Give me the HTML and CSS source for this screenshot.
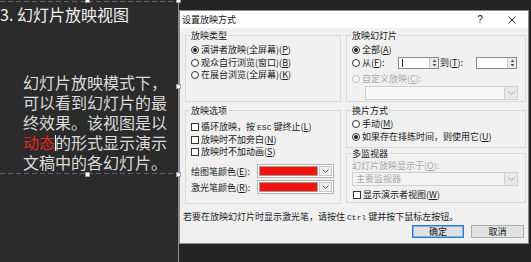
FILE: index.html
```html
<!DOCTYPE html>
<html lang="zh-CN">
<head>
<meta charset="utf-8">
<title>设置放映方式</title>
<link rel="stylesheet" href="styles.css">
</head>
<body>
<div class="stage">
  <section class="slide">
    <div class="textbox">
      <h1 class="slide-title">3. 幻灯片放映视图</h1>
      <p class="slide-body">幻灯片放映模式下，<br>可以看到幻灯片的最<br>终效果。该视图是以<br><span class="hot">动态</span><span class="caret"></span>的形式显示演示<br>文稿中的各幻灯片。</p>
      <span class="handle h-top-mid"></span>
      <span class="handle h-top-right"></span>
      <span class="handle h-mid-right"></span>
      <span class="handle h-bot-right"></span>
      <span class="handle h-bot-mid"></span>
    </div>
  </section>
  <section class="desk">
    <div class="dialog">
      <div class="titlebar">
        <span class="dlg-title">设置放映方式</span>
        <span class="tb-btn tb-help">?</span>
        <span class="tb-btn tb-close"><svg width="8" height="8" viewBox="0 0 8 8"><path d="M0.5 0.5 L7.5 7.5 M7.5 0.5 L0.5 7.5" stroke="#222" stroke-width="1" fill="none"/></svg></span>
      </div>
      <div class="dlg-body">
        <div class="columns">
          <div class="col col-left">
            <div class="group g-type">
              <div class="legend">放映类型</div>
              <div class="rows first">
                <div class="row"><span class="radio on"></span><span>演讲者放映(全屏幕)(<u>P</u>)</span></div>
                <div class="row"><span class="radio"></span><span>观众自行浏览(窗口)(<u>B</u>)</span></div>
                <div class="row"><span class="radio"></span><span>在展台浏览(全屏幕)(<u>K</u>)</span></div>
              </div>
            </div>
            <div class="group g-opts">
              <div class="legend">放映选项</div>
              <div class="rows opts">
                <div class="row"><span class="check"></span><span>循环放映，按 <span class="mono">ESC</span> 键终止(<u>L</u>)</span></div>
                <div class="row"><span class="check"></span><span>放映时不加旁白(<u>N</u>)</span></div>
                <div class="row"><span class="check"></span><span>放映时不加动画(<u>S</u>)</span></div>
              </div>
              <div class="color-row first-color">
                <span class="color-label">绘图笔颜色(<u>E</u>):</span>
                <span class="colorpick"><span class="swatch"></span><span class="arrowbox"><svg width="7" height="4" viewBox="0 0 7 4"><path d="M0.5 0.5 L3.5 3.5 L6.5 0.5" stroke="#555" fill="none"/></svg></span></span>
              </div>
              <div class="color-row">
                <span class="color-label">激光笔颜色(<u>R</u>):</span>
                <span class="colorpick"><span class="swatch"></span><span class="arrowbox"><svg width="7" height="4" viewBox="0 0 7 4"><path d="M0.5 0.5 L3.5 3.5 L6.5 0.5" stroke="#555" fill="none"/></svg></span></span>
              </div>
            </div>
          </div>
          <div class="col col-right">
            <div class="group g-slides">
              <div class="legend">放映幻灯片</div>
              <div class="rows first">
                <div class="row"><span class="radio on"></span><span>全部(<u>A</u>)</span></div>
                <div class="row row-range">
                  <span class="radio"></span><span class="range-label">从(<u>F</u>):</span>
                  <span class="spin"><span class="field"><span class="incaret"></span></span><span class="spinner"><svg width="5" height="8" viewBox="0 0 5 8"><path d="M2.5 0.5 L4.5 3 L0.5 3 Z M0.5 5 L4.5 5 L2.5 7.5 Z" fill="#555"/></svg></span></span>
                  <span class="range-label to">到(<u>T</u>):</span>
                  <span class="spin"><span class="field"></span><span class="spinner"><svg width="5" height="8" viewBox="0 0 5 8"><path d="M2.5 0.5 L4.5 3 L0.5 3 Z M0.5 5 L4.5 5 L2.5 7.5 Z" fill="#555"/></svg></span></span>
                </div>
                <div class="row row-custom disabled"><span class="radio off"></span><span>自定义放映(<u>C</u>):</span></div>
              </div>
              <div class="combo combo-custom"><span class="combo-text"></span><span class="arrowbox"><svg width="7" height="4" viewBox="0 0 7 4"><path d="M0.5 0.5 L3.5 3.5 L6.5 0.5" stroke="#aaa" fill="none"/></svg></span></div>
            </div>
            <div class="group g-advance">
              <div class="legend">换片方式</div>
              <div class="rows adv">
                <div class="row"><span class="radio"></span><span>手动(<u>M</u>)</span></div>
                <div class="row"><span class="radio on"></span><span>如果存在排练时间，则使用它(<u>U</u>)</span></div>
              </div>
            </div>
            <div class="group g-monitor">
              <div class="legend">多监视器</div>
              <div class="row mon-label disabled"><span>幻灯片放映显示于(<u>O</u>):</span></div>
              <div class="combo combo-monitor"><span class="combo-text">主要监视器</span><span class="arrowbox"><svg width="7" height="4" viewBox="0 0 7 4"><path d="M0.5 0.5 L3.5 3.5 L6.5 0.5" stroke="#aaa" fill="none"/></svg></span></div>
              <div class="row presenter"><span class="check"></span><span>显示演示者视图(<u>W</u>)</span></div>
            </div>
          </div>
        </div>
        <p class="note">若要在放映幻灯片时显示激光笔，请按住 <span class="mono">Ctrl</span> 键并按下鼠标左按钮。</p>
        <div class="buttons">
          <button class="btn btn-ok" type="button">确定</button>
          <button class="btn" type="button">取消</button>
        </div>
      </div>
    </div>
  </section>
</div>
</body>
</html>
```
FILE: styles.css
```css
* { box-sizing: border-box; }
html, body { margin: 0; padding: 0; }
body {
  width: 531px;
  height: 262px;
  overflow: hidden;
  background: #232323;
  font-family: "Noto Sans CJK SC", "Noto Sans", sans-serif;
}
.stage {
  display: flex;
  width: 531px;
  height: 262px;
}

/* ---------- slide ---------- */
.slide {
  width: 178px;
  flex: none;
  background: #2b2b2b;
}
.textbox {
  position: relative;
  margin-top: 1px;
  height: 173px;
  padding: 3px 0 2px;
  background-image:
    repeating-linear-gradient(90deg, #56637a 0 5px, transparent 5px 8px),
    repeating-linear-gradient(90deg, #56637a 0 5px, transparent 5px 8px);
  background-size: 100% 1px, 100% 1px;
  background-position: top left, bottom left;
  background-repeat: no-repeat;
}
.slide-title {
  margin: 0;
  font-weight: normal;
  font-size: 16px;
  line-height: 20px;
  color: #f2f2f2;
  white-space: nowrap;
}
.slide-body {
  margin: 48px 0 0;
  padding-left: 23px;
  font-size: 16px;
  line-height: 20px;
  color: #dcdcdc;
  white-space: nowrap;
}
.hot { color: #e8261c; }
.caret {
  display: inline-block;
  width: 1px;
  height: 16px;
  margin-right: -1px;
  background: #fff;
  vertical-align: -2px;
}
.handle {
  position: absolute;
  width: 5px;
  height: 5px;
  background: #fff;
  border: 1px solid #9a9a9a;
}
.h-top-mid { top: -3px; left: 85px; }
.h-top-right { top: -3px; right: -3px; }
.h-mid-right { top: 83px; right: -3px; }
.h-bot-right { bottom: -3px; right: -3px; }
.h-bot-mid { bottom: -3px; left: 85px; }

/* ---------- desk / dialog ---------- */
.desk {
  flex: 1;
  border-left: 1px solid #8a8a8a;
  background: #242424;
}
.dialog {
  margin-top: 10px;
  width: 350px;
  height: 234px;
  border: 1px solid #8c8c8c;
  background: #f0f0f0;
  font-size: 9px;
  color: #1a1a1a;
  display: flex;
  flex-direction: column;
}
.titlebar {
  height: 17px;
  flex: none;
  background: #fff;
  display: flex;
  align-items: center;
}
.dlg-title {
  flex: 1;
  padding-left: 2px;
  line-height: 17px;
  color: #111;
}
.tb-btn {
  width: 32px;
  height: 17px;
  display: flex;
  align-items: center;
  justify-content: center;
}
.tb-help { font-size: 10px; color: #222; font-family: "Liberation Sans", sans-serif; }
.dlg-body {
  flex: 1;
  padding: 7px 2px 5px 5px;
  display: flex;
  flex-direction: column;
}
.columns {
  display: flex;
  gap: 5px;
  align-items: flex-start;
}
.col {
  display: flex;
  flex-direction: column;
}
.col-left { width: 156px; gap: 8px; }
.col-right { width: 180px; }
.group {
  border: 1px solid #d9d9d9;
  padding: 0 4px 0 5px;
}
.legend {
  margin-top: -6px;
  margin-left: -1px;
  width: fit-content;
  height: 11px;
  line-height: 11px;
  padding: 0 1px;
  background: #f0f0f0;
  white-space: nowrap;
}
.g-type { height: 67px; }
.g-opts { height: 94px; }
.g-slides { height: 67px; }
.g-advance { height: 38px; margin-top: 8px; }
.g-monitor { height: 50px; margin-top: 5px; }

.rows { display: flex; flex-direction: column; }
.rows.first { margin-top: 3px; }
.rows.opts { margin-top: 5px; }
.rows.adv { margin-top: 2px; }
.row {
  display: flex;
  align-items: center;
  height: 12.5px;
  line-height: 12px;
  white-space: nowrap;
}
.row u { text-decoration: underline; text-underline-offset: 1px; }
.radio {
  flex: none;
  width: 8px;
  height: 8px;
  margin-right: 2px;
  border: 1px solid #333;
  border-radius: 50%;
  background: #fff;
  display: flex;
  align-items: center;
  justify-content: center;
}
.radio.on::after {
  content: "";
  width: 4px;
  height: 4px;
  border-radius: 50%;
  background: #1e1e1e;
}
.radio.off { border-color: #c4c4c4; background: #f6f6f6; }
.check {
  flex: none;
  width: 8px;
  height: 8px;
  margin-right: 2px;
  border: 1px solid #333;
  background: #fff;
}
.mono { font-family: "Liberation Mono", monospace; font-size: 8px; }
.disabled { color: #a8a8a8; }

.row-range { height: 13px; }
.range-label { width: 36px; flex: none; }
.range-label.to { width: 36px; margin-left: 1px; }
.spin {
  flex: none;
  display: flex;
  width: 41px;
  height: 12px;
  border: 1px solid #8a8a8a;
  background: #fff;
}
.field {
  flex: 1;
  display: flex;
  align-items: center;
  padding-left: 3px;
}
.incaret { width: 1px; height: 8px; background: #222; }
.spinner {
  width: 9px;
  border-left: 1px solid #c8c8c8;
  background: #ececec;
  display: flex;
  align-items: center;
  justify-content: center;
}
.row-custom { margin-top: 3.5px; height: 12px; }
.combo {
  display: flex;
  height: 14px;
  border: 1px solid #cfcfcf;
  background: #f7f7f7;
}
.combo-custom { width: 153px; margin-left: 13px; margin-top: 1px; }
.combo-monitor { width: 166px; background: #f3f3f3; }
.combo-text {
  flex: 1;
  padding-left: 3px;
  line-height: 12px;
  color: #a8a8a8;
}
.arrowbox {
  width: 13px;
  flex: none;
  border-left: 1px solid #d2d2d2;
  background: #e8e8e8;
  display: flex;
  align-items: center;
  justify-content: center;
}
.mon-label { margin-top: 1px; height: 12px; }
.presenter { margin-top: 3px; height: 12px; padding-left: 1px; }

.color-row {
  display: flex;
  align-items: center;
  height: 14px;
  margin-top: 2px;
  white-space: nowrap;
}
.color-row.first-color { margin-top: 5.5px; }
.color-label { width: 66px; flex: none; }
.colorpick {
  display: flex;
  width: 77px;
  height: 14px;
  border: 1px solid #b4b4b4;
  background: #fff;
  padding: 1px;
  gap: 1px;
}
.swatch {
  flex: 1;
  background: #f5120a;
  border: 1px solid #9a9a9a;
}
.colorpick .arrowbox { width: 13px; border: 1px solid #c8c8c8; background: #f0f0f0; }

.note {
  margin: 7px 0 0 -2px;
  line-height: 12px;
  height: 12px;
  white-space: nowrap;
}
.buttons {
  margin-top: 2px;
  display: flex;
  justify-content: flex-end;
  gap: 7px;
  padding-right: 2px;
}
.btn {
  width: 53px;
  height: 13px;
  padding: 0;
  margin: 0;
  border: 1px solid #adadad;
  background: #e1e1e1;
  font-family: inherit;
  font-size: 9px;
  line-height: 11px;
  color: #111;
}
.btn-ok { width: 52px; border-color: #2a7bd3; box-shadow: inset 0 0 0 1px #7fb2e8; }
```
